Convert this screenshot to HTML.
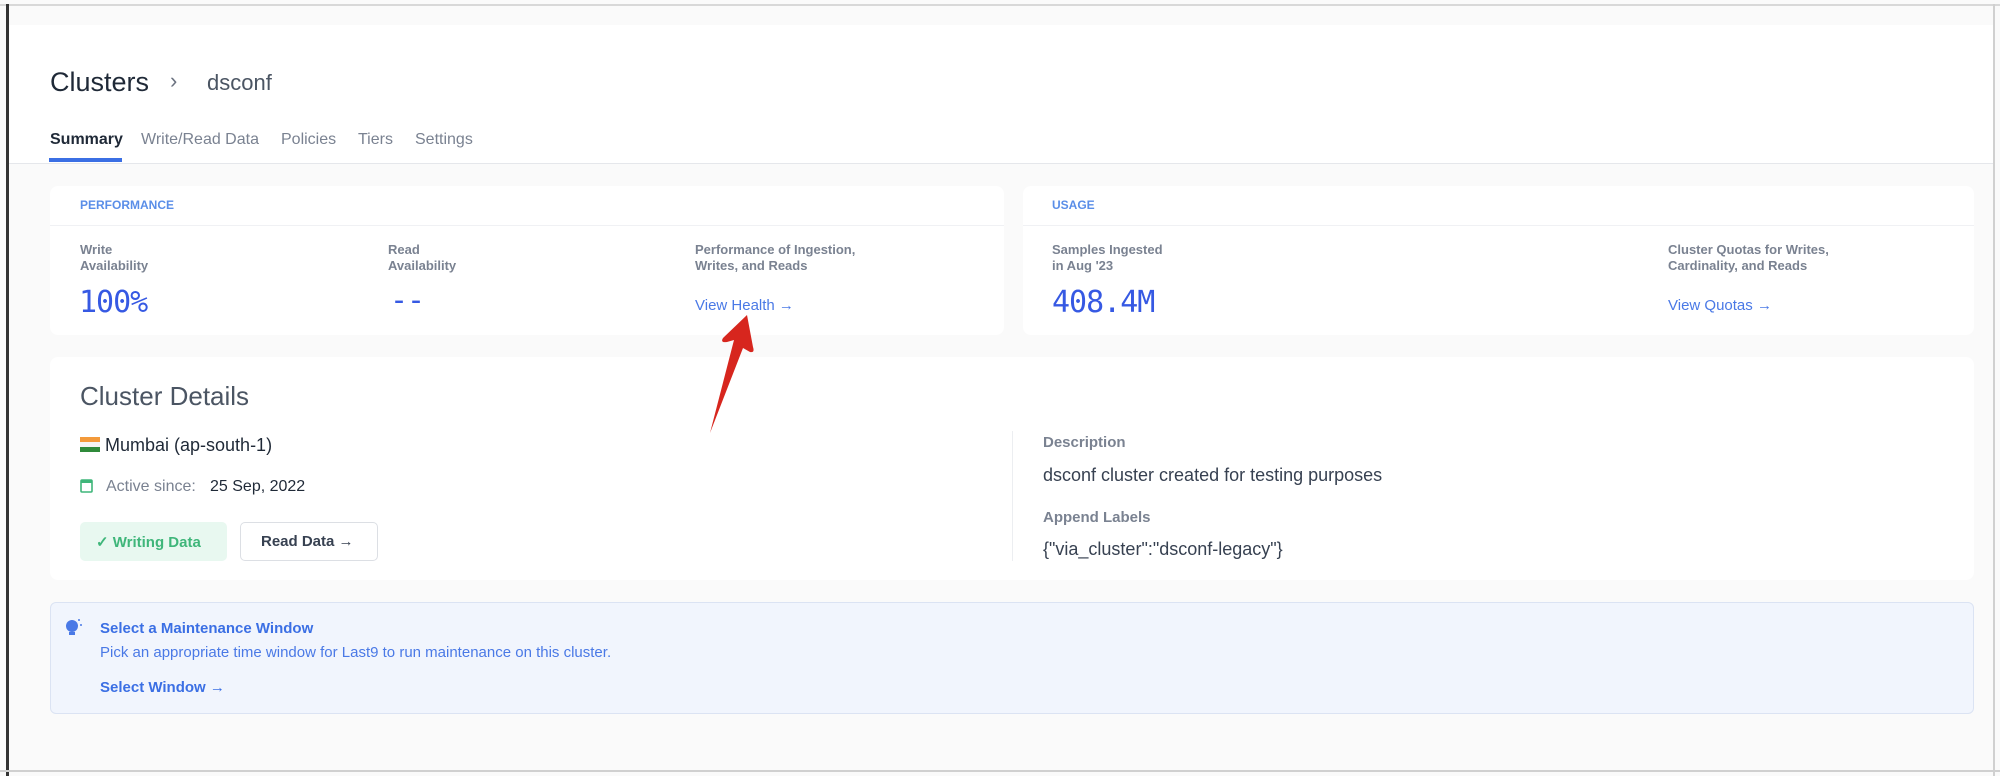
<!DOCTYPE html>
<html><head><style>
*{margin:0;padding:0;box-sizing:border-box}
body{width:2000px;height:776px;background:#fff;font-family:"Liberation Sans",sans-serif;position:relative;overflow:hidden}
.a{position:absolute;white-space:nowrap}
.card{position:absolute;background:#fff;border-radius:8px}
.lbl{font-size:13px;color:#7a8291;font-weight:bold;line-height:16px}
.val{font-family:"DejaVu Sans Mono","Liberation Mono",monospace;font-size:30px;color:#3659e3;letter-spacing:-1px}
.lnk{font-size:15px;color:#4a79e6}
</style></head><body>
<div class="a" style="left:0;top:0;width:2000px;height:776px;background:#fafafa"></div>
<div class="a" style="left:8px;top:25px;width:1986px;height:138px;background:#fff"></div>
<div class="a" style="left:8px;top:163px;width:1986px;height:1px;background:#e5e7eb"></div>
<div class="a" style="left:0;top:4px;width:2000px;height:2px;background:#d8d8d8"></div>
<div class="a" style="left:6px;top:4px;width:3px;height:772px;background:#333"></div>
<div class="a" style="left:1993px;top:4px;width:2px;height:772px;background:#d0d0d0"></div>
<div class="a" style="left:0;top:770px;width:2000px;height:2px;background:#d0d0d0"></div>

<div class="a" style="left:50px;top:67px;font-size:27px;color:#1f2937">Clusters</div>
<div class="a" style="left:170px;top:68px;font-size:22px;color:#6b7280">›</div>
<div class="a" style="left:207px;top:70px;font-size:22px;color:#4b5563">dsconf</div>

<div class="a" style="left:50px;top:131px;font-size:16px;color:#1f2937;font-weight:bold">Summary</div>
<div class="a" style="left:49px;top:158px;width:73px;height:4px;background:#3b6fe4"></div>
<div class="a" style="left:141px;top:131px;font-size:16px;color:#7a8291">Write/Read Data</div>
<div class="a" style="left:281px;top:131px;font-size:16px;color:#7a8291">Policies</div>
<div class="a" style="left:358px;top:131px;font-size:16px;color:#7a8291">Tiers</div>
<div class="a" style="left:415px;top:131px;font-size:16px;color:#7a8291">Settings</div>

<div class="card" style="left:50px;top:186px;width:954px;height:149px"></div>
<div class="a" style="left:50px;top:225px;width:954px;height:1px;background:#f0f1f4"></div>
<div class="a" style="left:80px;top:198px;font-size:12px;color:#5a8ee8;font-weight:bold">PERFORMANCE</div>
<div class="a lbl" style="left:80px;top:242px">Write<br>Availability</div>
<div class="a val" style="left:79px;top:285px">100%</div>
<div class="a lbl" style="left:388px;top:242px">Read<br>Availability</div>
<div class="a val" style="left:390px;top:283px">--</div>
<div class="a lbl" style="left:695px;top:242px">Performance of Ingestion,<br>Writes, and Reads</div>
<div class="a lnk" style="left:695px;top:297px">View Health →</div>

<div class="card" style="left:1023px;top:186px;width:951px;height:149px"></div>
<div class="a" style="left:1023px;top:225px;width:951px;height:1px;background:#f0f1f4"></div>
<div class="a" style="left:1052px;top:198px;font-size:12px;color:#5a8ee8;font-weight:bold">USAGE</div>
<div class="a lbl" style="left:1052px;top:242px">Samples Ingested<br>in Aug '23</div>
<div class="a val" style="left:1052px;top:285px">408.4M</div>
<div class="a lbl" style="left:1668px;top:242px">Cluster Quotas for Writes,<br>Cardinality, and Reads</div>
<div class="a lnk" style="left:1668px;top:297px">View Quotas →</div>

<div class="card" style="left:50px;top:357px;width:1924px;height:223px"></div>
<div class="a" style="left:80px;top:381px;font-size:26px;color:#4b5563">Cluster Details</div>
<div class="a" style="left:80px;top:437px;width:20px;height:5px;background:#f39a3b"></div>
<div class="a" style="left:80px;top:442px;width:20px;height:5px;background:#f4f4f4"></div>
<div class="a" style="left:80px;top:447px;width:20px;height:5px;background:#2f8a3a"></div>
<div class="a" style="left:105px;top:435px;font-size:18px;color:#1f2937">Mumbai (ap-south-1)</div>
<svg class="a" style="left:80px;top:478px" width="14" height="15"><rect x="1" y="2" width="11" height="12" rx="1" fill="none" stroke="#3fb67a" stroke-width="1.6"/><rect x="1" y="2" width="11" height="3" fill="#3fb67a"/></svg>
<div class="a" style="left:106px;top:478px;font-size:16px;color:#7a8291">Active since:</div>
<div class="a" style="left:210px;top:478px;font-size:16px;color:#1f2937">25 Sep, 2022</div>
<div class="a" style="left:80px;top:522px;width:147px;height:39px;background:#e8f8f0;border-radius:5px"></div>
<div class="a" style="left:96px;top:533px;font-size:15px;color:#3fb67a;font-weight:bold">✓ Writing Data</div>
<div class="a" style="left:240px;top:522px;width:138px;height:39px;border:1px solid #dcdfe4;border-radius:5px"></div>
<div class="a" style="left:261px;top:533px;font-size:15px;color:#374151;font-weight:bold">Read Data →</div>
<div class="a" style="left:1012px;top:431px;width:1px;height:130px;background:#eceef1"></div>
<div class="a" style="left:1043px;top:434px;font-size:15px;color:#7a8291;font-weight:bold">Description</div>
<div class="a" style="left:1043px;top:465px;font-size:18px;color:#374151">dsconf cluster created for testing purposes</div>
<div class="a" style="left:1043px;top:509px;font-size:15px;color:#7a8291;font-weight:bold">Append Labels</div>
<div class="a" style="left:1043px;top:539px;font-size:18px;color:#374151">{"via_cluster":"dsconf-legacy"}</div>

<div class="a" style="left:50px;top:602px;width:1924px;height:112px;background:#f1f5fd;border:1px solid #dbe3f3;border-radius:6px"></div>
<svg class="a" style="left:64px;top:618px" width="22" height="22"><circle cx="8" cy="8" r="6" fill="#4a79e6"/><rect x="5" y="14" width="6" height="3" fill="#4a79e6"/><circle cx="15" cy="2" r="1" fill="#4a79e6"/><circle cx="17" cy="7" r="1" fill="#4a79e6"/></svg>
<div class="a" style="left:100px;top:620px;font-size:15px;color:#3b6fe4;font-weight:bold">Select a Maintenance Window</div>
<div class="a" style="left:100px;top:644px;font-size:15px;color:#4a79e6">Pick an appropriate time window for Last9 to run maintenance on this cluster.</div>
<div class="a" style="left:100px;top:679px;font-size:15px;color:#3b6fe4;font-weight:bold">Select Window →</div>

<svg class="a" style="left:0;top:0" width="2000" height="776"><path d="M747 315 L723 338 Q720 343 727 342 L734 340 L710 433 L743 348 L750 352 Q755 353 753 347 Z" fill="#d7261e"/></svg>
</body></html>
